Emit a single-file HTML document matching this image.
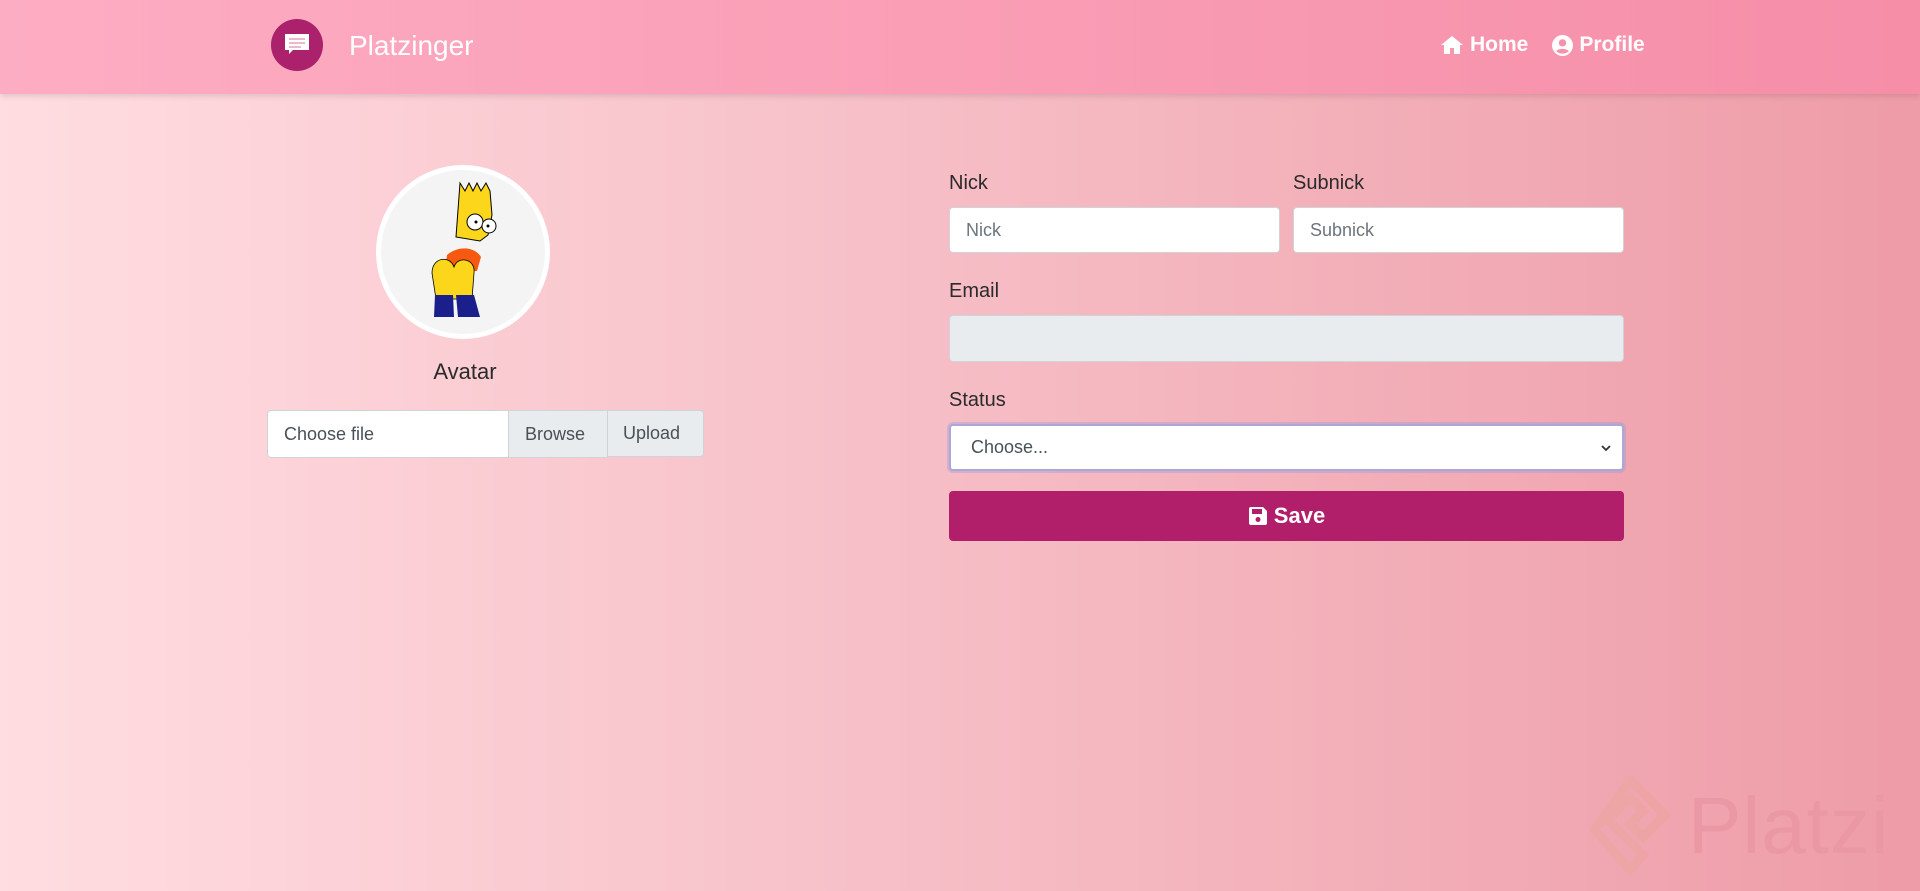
<!DOCTYPE html>
<html><head><meta charset="utf-8"><style>
*{box-sizing:border-box;margin:0;padding:0}
body{width:1920px;height:891px;overflow:hidden;font-family:"Liberation Sans",sans-serif;background:linear-gradient(90deg,#ffdde1 0%,#f7c0c8 45%,#ee9ca7 100%);position:relative;color:#212529}
.nav{position:absolute;left:0;top:0;width:1920px;height:94px;background:linear-gradient(90deg,#fdadc3,#f68ea8);box-shadow:0 2px 6px rgba(0,0,0,.12)}
.logo{position:absolute;left:271px;top:19px;width:52px;height:52px;border-radius:50%;background:#ab216b}
.title{position:absolute;left:349px;top:30px;font-size:28px;color:#fff}
.links{position:absolute;left:1440px;top:33px;font-size:21px;color:#fff;display:flex;align-items:center;gap:6px;font-weight:bold}
.lbl{position:absolute;font-size:20px;color:#2a2a2a}
.inp{position:absolute;background:#fff;border:1px solid #ced4da;border-radius:4px;font-size:18px;color:#6c757d;padding-left:16px;display:flex;align-items:center}
</style></head><body>
<div class="nav">
 <div class="logo"><svg width="52" height="52" viewBox="0 0 52 52"><path d="M14 15h24v16H22l-4 4v-4h-4z" fill="#fff"/><path d="M18 20h16M18 24h16M18 28h12" stroke="#e8a0bb" stroke-width="1.5"/></svg></div>
 <div class="title">Platzinger</div>
 <div class="links">
  <svg width="24" height="20" viewBox="0 0 24 20"><path d="M12 1L1 10h3v9h6v-6h4v6h6v-9h3z" fill="#fff"/></svg><span>Home</span>
  <span style="width:12px"></span>
  <svg width="21" height="21" viewBox="0 0 20 20"><circle cx="10" cy="10" r="10" fill="#fff"/><circle cx="10" cy="7.5" r="3.5" fill="#f792aa"/><path d="M4 15.5c2-3 10-3 12 0c-3 3-9 3-12 0z" fill="#f792aa"/></svg><span>Profile</span>
 </div>
</div>
<div style="position:absolute;left:376px;top:165px;width:174px;height:174px;border-radius:50%;background:#f4f4f4;border:5px solid #fff"></div>
<svg style="position:absolute;left:410px;top:177px" width="110" height="150" viewBox="0 0 110 150">
<path d="M50 6l5 8 4-8 4 8 4-8 4 8 5-8 4 8 2 24-4 20-8 6-24-4z" fill="#fcd61a" stroke="#000" stroke-width="1"/>
<circle cx="65" cy="45" r="8" fill="#fff" stroke="#000"/><circle cx="79" cy="49" r="7" fill="#fff" stroke="#000"/>
<circle cx="66" cy="45" r="1.5"/><circle cx="78" cy="49" r="1.5"/>
<path d="M37 78c12-10 28-8 34 2l-4 14-32 0z" fill="#f55a10"/>
<path d="M22 96c0-16 18-18 22-6c4-12 22-8 20 6l-2 26H26z" fill="#fcd61a" stroke="#000" stroke-width=".8"/>
<path d="M25 118h18l1 22-20 0zM46 118h18l6 22-22 0z" fill="#1a1f8c"/>
</svg>
<div style="position:absolute;left:390px;top:359px;width:150px;text-align:center;font-size:22px;color:#2a2a2a">Avatar</div>
<div class="inp" style="left:267px;top:410px;width:242px;height:48px;border-radius:4px 0 0 4px;color:#495057">Choose file</div>
<div class="inp" style="left:508px;top:410px;width:100px;height:48px;background:#e9ecef;border-radius:0;color:#495057;padding-left:16px">Browse</div>
<div class="inp" style="left:607px;top:410px;width:97px;height:47px;background:#e9ecef;border-radius:0 4px 4px 0;color:#495057;padding-left:15px">Upload</div>

<div class="lbl" style="left:949px;top:172px">Nick</div>
<div class="lbl" style="left:1293px;top:172px">Subnick</div>
<div class="inp" style="left:949px;top:207px;width:331px;height:46px">Nick</div>
<div class="inp" style="left:1293px;top:207px;width:331px;height:46px">Subnick</div>
<div class="lbl" style="left:949px;top:280px">Email</div>
<div class="inp" style="left:949px;top:315px;width:675px;height:47px;background:#e9ecef"></div>
<div class="lbl" style="left:949px;top:389px">Status</div>
<div class="inp" style="left:949px;top:424px;width:675px;height:47px;border:2px solid #a9a8d8;box-shadow:0 0 0 2px rgba(150,150,220,.35);color:#495057;padding-left:20px">Choose...<svg style="position:absolute;right:10px;top:18px" width="12" height="9" viewBox="0 0 12 9"><path d="M2 2l4 4 4-4" stroke="#333" stroke-width="1.8" fill="none"/></svg></div>
<div style="position:absolute;left:949px;top:491px;width:675px;height:50px;background:#b11f6a;border-radius:4px;color:#fff;font-size:22px;font-weight:bold;display:flex;align-items:center;justify-content:center;gap:6px">
<svg width="20" height="20" viewBox="0 0 20 20"><path d="M1 3a2 2 0 012-2h12l4 4v12a2 2 0 01-2 2H3a2 2 0 01-2-2z" fill="#fff"/><rect x="4" y="3" width="10" height="5" fill="#b11f6a"/><circle cx="10" cy="13.5" r="2.5" fill="#b11f6a"/></svg>Save</div>

<svg style="position:absolute;left:1585px;top:775px" width="90" height="110" viewBox="0 0 90 110"><path d="M45 5L80 40 58 62 45 49 58 36 45 23 23 45 45 67 45 67 58 80 45 95 10 55z" fill="none" stroke="#eba39a" stroke-width="9" opacity=".45"/></svg>
<div style="position:absolute;left:1688px;top:780px;font-size:80px;color:#ea98a3;letter-spacing:1px">Platzi</div>
</body></html>
